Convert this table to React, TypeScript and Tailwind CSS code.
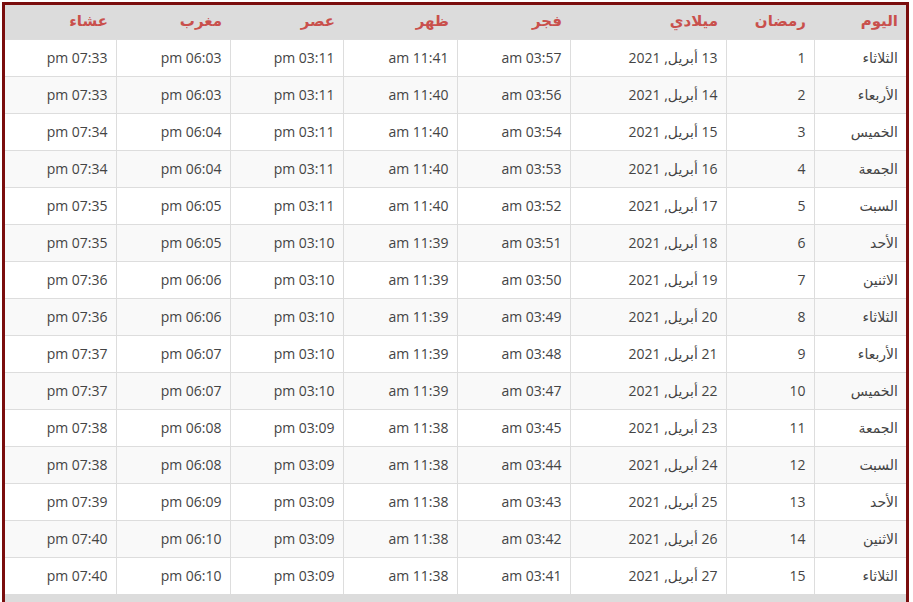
import React from 'react';

interface Row {
  day: string;
  ramadan: number;
  date: number;
  fajr: string;
  dhuhr: string;
  asr: string;
  maghrib: string;
  isha: string;
}

const rows: Row[] = [
  { day: 'الثلاثاء', ramadan: 1, date: 13, fajr: '03:57', dhuhr: '11:41', asr: '03:11', maghrib: '06:03', isha: '07:33' },
  { day: 'الأربعاء', ramadan: 2, date: 14, fajr: '03:56', dhuhr: '11:40', asr: '03:11', maghrib: '06:03', isha: '07:33' },
  { day: 'الخميس', ramadan: 3, date: 15, fajr: '03:54', dhuhr: '11:40', asr: '03:11', maghrib: '06:04', isha: '07:34' },
  { day: 'الجمعة', ramadan: 4, date: 16, fajr: '03:53', dhuhr: '11:40', asr: '03:11', maghrib: '06:04', isha: '07:34' },
  { day: 'السبت', ramadan: 5, date: 17, fajr: '03:52', dhuhr: '11:40', asr: '03:11', maghrib: '06:05', isha: '07:35' },
  { day: 'الأحد', ramadan: 6, date: 18, fajr: '03:51', dhuhr: '11:39', asr: '03:10', maghrib: '06:05', isha: '07:35' },
  { day: 'الاثنين', ramadan: 7, date: 19, fajr: '03:50', dhuhr: '11:39', asr: '03:10', maghrib: '06:06', isha: '07:36' },
  { day: 'الثلاثاء', ramadan: 8, date: 20, fajr: '03:49', dhuhr: '11:39', asr: '03:10', maghrib: '06:06', isha: '07:36' },
  { day: 'الأربعاء', ramadan: 9, date: 21, fajr: '03:48', dhuhr: '11:39', asr: '03:10', maghrib: '06:07', isha: '07:37' },
  { day: 'الخميس', ramadan: 10, date: 22, fajr: '03:47', dhuhr: '11:39', asr: '03:10', maghrib: '06:07', isha: '07:37' },
  { day: 'الجمعة', ramadan: 11, date: 23, fajr: '03:45', dhuhr: '11:38', asr: '03:09', maghrib: '06:08', isha: '07:38' },
  { day: 'السبت', ramadan: 12, date: 24, fajr: '03:44', dhuhr: '11:38', asr: '03:09', maghrib: '06:08', isha: '07:38' },
  { day: 'الأحد', ramadan: 13, date: 25, fajr: '03:43', dhuhr: '11:38', asr: '03:09', maghrib: '06:09', isha: '07:39' },
  { day: 'الاثنين', ramadan: 14, date: 26, fajr: '03:42', dhuhr: '11:38', asr: '03:09', maghrib: '06:10', isha: '07:40' },
  { day: 'الثلاثاء', ramadan: 15, date: 27, fajr: '03:41', dhuhr: '11:38', asr: '03:09', maghrib: '06:10', isha: '07:40' },
];

const headers = ['اليوم', 'رمضان', 'ميلادي', 'فجر', 'ظهر', 'عصر', 'مغرب', 'عشاء'];
const widths = ['w-[92px]', 'w-[88px]', 'w-[156px]', 'w-[113px]', 'w-[114px]', 'w-[113px]', 'w-[114px]', 'w-[111px]'];

export default function App() {
  return (
    <div className="w-[913px] h-[602px] overflow-hidden bg-white pl-[2px] pt-[2px] font-['Open_Sans','DejaVu_Sans',sans-serif]">
      <div className="w-[907px] h-[700px] border-x-[3px] border-t-[3px] border-[#7a0d0d] bg-[#dcdcdc]">
        <table dir="rtl" className="w-[901px] table-fixed border-collapse text-right">
          <colgroup>
            {widths.map((w, i) => (
              <col key={i} className={w} />
            ))}
          </colgroup>
          <thead>
            <tr className="h-[34px] bg-[#dcdcdc]">
              {headers.map((h) => (
                <th key={h} className="px-2 pb-[4px] text-[15px] font-bold text-[#c9504c]">
                  {h}
                </th>
              ))}
            </tr>
          </thead>
          <tbody className="text-[14px] text-[#444]">
            {rows.map((r, i) => {
              const cells = [
                r.day,
                String(r.ramadan),
                `${r.date} أبريل, 2021`,
                `${r.fajr} am`,
                `${r.dhuhr} am`,
                `${r.asr} pm`,
                `${r.maghrib} pm`,
                `${r.isha} pm`,
              ];
              return (
                <tr key={i} className={`h-[37px] ${i % 2 === 1 ? 'bg-[#f9f9f9]' : 'bg-white'}`}>
                  {cells.map((c, j) => (
                    <td
                      key={j}
                      className="border-t border-[#dddddd] border-l px-2 last:border-l-0 whitespace-nowrap"
                    >
                      {c}
                    </td>
                  ))}
                </tr>
              );
            })}
          </tbody>
        </table>
      </div>
    </div>
  );
}
